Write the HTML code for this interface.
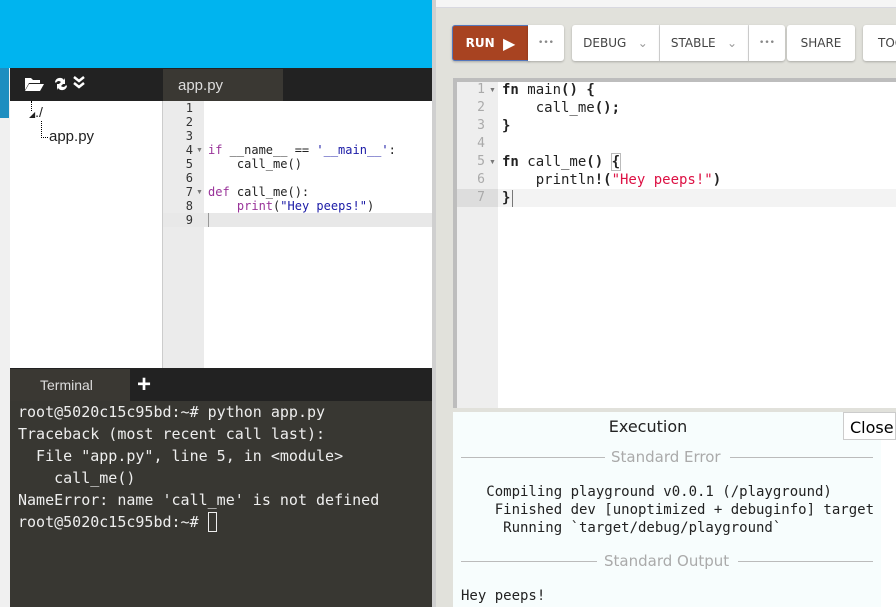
<!DOCTYPE html>
<html><head><style>
*{margin:0;padding:0;box-sizing:border-box}
body{width:896px;height:607px;overflow:hidden;position:relative;background:#e1e1db;font-family:"Liberation Sans",sans-serif}
.a{position:absolute}
.mono{font-family:"DejaVu Sans Mono","Liberation Mono",monospace}
.btn{position:absolute;top:25px;height:36px;background:#fff;border-radius:3px;box-shadow:0 1px 2px rgba(0,0,0,.25);font-size:12px;color:#444;display:flex;align-items:center;justify-content:center;font-family:"DejaVu Sans",sans-serif}
.ar{position:absolute;font-size:7px;color:#777;line-height:7px}
</style></head><body>
<!-- left panel -->
<div class="a" style="left:0;top:0;width:432px;height:68px;background:#00b4ef"></div>
<div class="a" style="left:0;top:68px;width:10px;height:539px;background:#f0f0f0"></div>
<div class="a" style="left:0;top:68px;width:9px;height:50px;background:#1e8ec0"></div>
<div class="a" style="left:10px;top:68px;width:422px;height:33px;background:#222"></div>
<div class="a" style="left:163px;top:69px;width:120px;height:32px;background:#3a3833;color:#ddd;font-size:15px;padding:8px 0 0 15px">app.py</div>
<svg class="a" style="left:24px;top:74px" width="70" height="20" viewBox="0 0 70 20">
<path d="M1 4h6l2 2h7v3H5L1 16z M5 10h15l-4 7H1z" fill="#fff"/>
<path d="M31 8a5 5 0 0 1 9-2l1-2v6h-6l2-2a3 3 0 0 0-5 1z M43 12a5 5 0 0 1-9 2l-1 2v-6h6l-2 2a3 3 0 0 0 5-1z" fill="#fff"/>
<path d="M50 3l5 4 5-4M50 9l5 4 5-4" stroke="#fff" stroke-width="2.5" fill="none"/>
</svg>
<div class="a" style="left:10px;top:101px;width:153px;height:267px;background:#fff;border-right:1px solid #ccc"></div>
<div class="a" style="left:31px;top:101px;height:10px;border-left:1px dotted #000"></div>
<div class="a" style="left:29px;top:104px;font-size:14px;color:#222"><span style="font-size:8px">◢</span>./</div>
<div class="a" style="left:41px;top:121px;height:17px;width:7px;border-left:1px dotted #000;border-bottom:1px dotted #000"></div>
<div class="a" style="left:49px;top:128px;font-size:15px;color:#222">app.py</div>
<div class="a" style="left:163px;top:101px;width:41px;height:267px;background:#ebebeb"></div>
<div class="a" style="left:204px;top:101px;width:228px;height:267px;background:#fff"></div>
<div class="a" style="left:163px;top:213px;width:269px;height:14px;background:#e8e8e8"></div>
<div class="a mono" style="left:163px;top:101px;font-size:12px;line-height:14px;color:#333">
<div style="padding-left:10px;width:30px;text-align:right">1<br>2<br>3<br>4<br>5<br>6<br>7<br>8<br>9</div></div>
<div class="ar" style="left:196px;top:147px">▼</div>
<div class="ar" style="left:196px;top:189px">▼</div>
<div class="a mono" style="left:208px;top:143px;font-size:12px;line-height:14px;color:#222;white-space:pre"><span style="color:#993399">if</span> __name__ == <span style="color:#1a1aa6">'__main__'</span>:
    call_me()

<span style="color:#993399">def</span> call_me():
    <span style="color:#993399">print</span>(<span style="color:#1a1aa6">"Hey peeps!"</span>)
</div>
<div class="a" style="left:208px;top:213px;width:1px;height:14px;background:#999"></div>
<!-- terminal -->
<div class="a" style="left:10px;top:368px;width:422px;height:33px;background:#222"></div>
<div class="a" style="left:10px;top:369px;width:120px;height:32px;background:#3a3833;color:#ddd;font-size:14px;padding:8px 0 0 30px">Terminal</div>
<div class="a" style="left:137px;top:371px;color:#fff;font-size:24px;font-weight:bold">+</div>
<div class="a mono" style="left:10px;top:401px;width:422px;height:206px;background:#383732;color:#eee;font-size:15px;line-height:22px;padding:0 0 0 8px;white-space:pre">root@5020c15c95bd:~# python app.py
Traceback (most recent call last):
  File "app.py", line 5, in &lt;module&gt;
    call_me()
NameError: name 'call_me' is not defined
root@5020c15c95bd:~# <span style="display:inline-block;width:9px;height:20px;border:1px solid #eee;vertical-align:-5px"></span></div>
<!-- divider -->
<div class="a" style="left:432px;top:0;width:4px;height:607px;background:#cfcfcf"></div>
<!-- right -->
<div class="a" style="left:436px;top:0;width:460px;height:8px;background:#f5f5f5;border-bottom:1px solid #d8d8e0"></div>
<div class="btn" style="left:452px;width:77px;background:#a84321;color:#fff;font-weight:bold;border:1px solid #5577bb;border-radius:3px 0 0 3px">RUN&nbsp;&nbsp;<span style="font-size:16px">▶</span></div>
<div class="btn" style="left:528px;width:36px;border-radius:0 3px 3px 0;color:#888;font-size:9px">•••</div>
<div class="btn" style="left:572px;width:88px;border-radius:3px 0 0 3px;border-right:1px solid #ddd">DEBUG&nbsp;&nbsp;&nbsp;<span style="color:#999">⌄</span></div>
<div class="btn" style="left:660px;width:89px;border-radius:0;border-right:1px solid #ddd">STABLE&nbsp;&nbsp;&nbsp;<span style="color:#999">⌄</span></div>
<div class="btn" style="left:749px;width:36px;border-radius:0 3px 3px 0;color:#888;font-size:9px">•••</div>
<div class="btn" style="left:787px;width:68px">SHARE</div>
<div class="btn" style="left:863px;width:60px;justify-content:flex-start;padding-left:15px">TOOLS</div>
<div class="a" style="left:453px;top:78px;width:443px;height:330px;background:#fff;border:4px solid #bdbdbd;border-right:none;border-bottom:none"></div>
<div class="a" style="left:457px;top:82px;width:41px;height:326px;background:#eee"></div>
<div class="a" style="left:457px;top:189px;width:439px;height:18px;background:#f3f3f3"></div>
<div class="a" style="left:457px;top:189px;width:41px;height:18px;background:#ddd"></div>
<div class="a mono" style="left:457px;top:81px;width:28px;text-align:right;font-size:13px;line-height:18px;color:#aaa">1<br>2<br>3<br>4<br>5<br>6<br>7</div>
<div class="ar" style="left:489px;top:87px">▼</div>
<div class="ar" style="left:489px;top:159px">▼</div>
<div class="a mono" style="left:502px;top:81px;font-size:14px;line-height:18px;color:#222;white-space:pre"><b>fn</b> main<b>()</b> <b>{</b>
    call_me<b>();</b>
<b>}</b>

<b>fn</b> call_me<b>()</b> <b style="outline:1px solid #bbb">{</b>
    println<b>!(</b><span style="color:#dd1144">"Hey peeps!"</span><b>)</b>
<b>}</b></div>
<div class="a" style="left:512px;top:190px;width:1px;height:17px;background:#777"></div>
<!-- output -->
<div class="a" style="left:453px;top:412px;width:443px;height:195px;background:#f7fdfd"></div>
<div class="a" style="left:453px;top:417px;width:390px;text-align:center;font-size:16px;color:#222;font-family:'DejaVu Sans',sans-serif">Execution</div>
<div class="a" style="left:843px;top:412px;width:53px;height:28px;background:#fff;border:1px solid #ccc;font-size:16px;padding:5px 0 0 6px;font-family:'DejaVu Sans',sans-serif">Close</div>
<div class="a" style="left:461px;top:457px;width:144px;height:1px;background:#bbb"></div>
<div class="a" style="left:611px;top:448px;font-size:15px;color:#aaa;font-family:'DejaVu Sans',sans-serif">Standard Error</div>
<div class="a" style="left:730px;top:457px;width:143px;height:1px;background:#bbb"></div>
<div class="a mono" style="left:461px;top:483px;font-size:14px;line-height:18px;color:#222;white-space:pre">   Compiling playground v0.0.1 (/playground)
    Finished dev [unoptimized + debuginfo] target
     Running `target/debug/playground`</div>
<div class="a" style="left:461px;top:561px;width:136px;height:1px;background:#bbb"></div>
<div class="a" style="left:604px;top:552px;font-size:15px;color:#aaa;font-family:'DejaVu Sans',sans-serif">Standard Output</div>
<div class="a" style="left:738px;top:561px;width:135px;height:1px;background:#bbb"></div>
<div class="a mono" style="left:461px;top:587px;font-size:14px;line-height:18px;color:#222">Hey peeps!</div>
<div class="a" style="left:881px;top:440px;width:15px;height:167px;background:#fff"></div>
</body></html>
